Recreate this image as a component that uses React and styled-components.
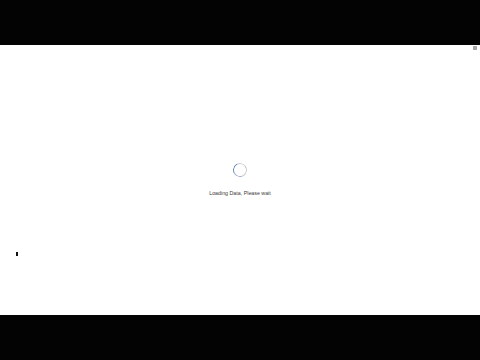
import React from "react";
import styled, { createGlobalStyle } from "styled-components";

const Global = createGlobalStyle`
    html, body {
        margin: 0;
        padding: 0;
        background: #000;
    }
    body {
        font-family: "Liberation Sans", Arial, sans-serif;
    }
`;

const Frame = styled.div`
    width: 480px;
    height: 360px;
    display: flex;
    flex-direction: column;
    background: #000;
`;

const Letterbox = styled.div`
    height: 45px;
    background: #030303;
`;

const Stage = styled.div`
    position: relative;
    flex: 1;
    background: #fff;
    display: flex;
    flex-direction: column;
    align-items: center;
    justify-content: center;
    gap: 13px;
`;

const Spinner = styled.div`
    width: 12px;
    height: 12px;
    border-radius: 50%;
    border: 1px solid #c9ccd0;
    border-left-color: #5b7fb0;
    border-bottom-color: #9aaecb;
    transform: rotate(20deg);
    margin-top: -2px;
`;

const Message = styled.p`
    margin: 0;
    font-size: 5.3px;
    color: #3a3a3a;
`;

const CloseDot = styled.span`
    position: absolute;
    top: 1px;
    right: 3px;
    width: 4px;
    height: 4px;
    background: #a8a8a8;
`;

const Cursor = styled.span`
    position: absolute;
    left: 16px;
    top: 207px;
    width: 2px;
    height: 4px;
    background: #111;
`;

export default function App() {
    return (
        <Frame>
            <Global />
            <Letterbox />
            <Stage>
                <CloseDot />
                <Spinner />
                <Message>Loading Data, Please wait</Message>
                <Cursor />
            </Stage>
            <Letterbox />
        </Frame>
    );
}
